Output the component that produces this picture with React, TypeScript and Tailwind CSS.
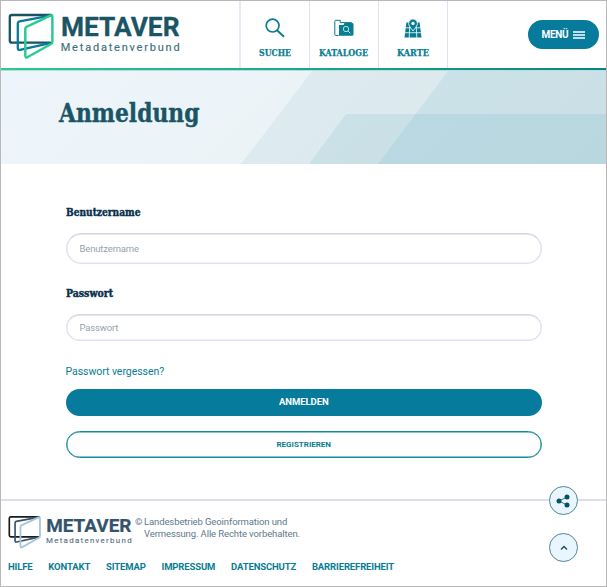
import React from "react";

const SLAB = "font-['DejaVu_Serif_Condensed','DejaVu_Serif',serif] font-bold";

type LogoProps = {
  className: string;
  back: string;
  middle: string;
  front: string;
  title: string;
  subtitle: string;
};

function Logo({ className, back, middle, front, title, subtitle }: LogoProps) {
  return (
    <svg viewBox="0 0 174 50" className={className} fill="none" strokeLinejoin="round" strokeLinecap="round">
      <path d="M43 4H4Q1.8 4 1.8 6V29.5Q1.8 31.7 4 31.7H42" stroke={back} strokeWidth="2.3" />
      <path d="M43.5 4.3 11.6 10.3Q9.8 10.7 9.8 12.6V37Q9.8 39.3 12 38.8L41 32.4" stroke={middle} strokeWidth="2.3" />
      <path d="M42.3 4.7 18.5 15.8Q17.3 16.4 17.3 17.8V44.5Q17.3 47.4 19.8 46L43 33Q44.4 32.2 44.4 30.4V6.2Q44.4 3.8 42.3 4.7Z" stroke={front} strokeWidth="2.5" />
      <text x="53" y="24.6" fontSize="26" fontWeight="700" fontFamily="Roboto, sans-serif" textLength="118.5" lengthAdjust="spacingAndGlyphs" fill={title} stroke={title} strokeWidth=".3">
        METAVER
      </text>
      <text x="52.7" y="40.4" fontSize="11" fontFamily="Roboto, sans-serif" textLength="119" fill={subtitle} stroke={subtitle} strokeWidth=".15">
        Metadatenverbund
      </text>
    </svg>
  );
}

function SearchIcon() {
  return (
    <svg viewBox="0 0 20 20" className="h-5 w-5" fill="none" stroke="#067d91">
      <circle cx="7.6" cy="7.6" r="6.4" strokeWidth="1.7" />
      <path d="m12 12.2 7 6.6" strokeWidth="1.9" />
    </svg>
  );
}

function CatalogIcon() {
  return (
    <svg viewBox="0 0 20 20" className="h-5 w-5" fill="none">
      <path d="M4.5 17.5H1.8Q.8 17.5.8 16.5V3.2Q.8 2.3 1.8 2.3H6.2V4.6H17.5V6" stroke="#067d91" strokeWidth="1" />
      <path d="M5 17.8V7H9.5L10.5 5H18Q19.5 5 19.5 6.3V16.5Q19.5 17.8 18 17.8Z" fill="#067d91" />
      <circle cx="12" cy="11" r="2.7" stroke="#b8dfe5" strokeWidth="1" />
      <path d="m14 13 2.4 2.4" stroke="#b8dfe5" strokeWidth="1" />
    </svg>
  );
}

function MapIcon() {
  return (
    <svg viewBox="0 0 20 20" className="h-5 w-5">
      <path d="M3.4 4.5H16.6L18.5 19.5H1.5Z" fill="#067d91" />
      <path d="M1 9.8H19M1 14.7H19M7 3 6.2 20M13 3l.8 17" stroke="white" strokeWidth=".8" />
      <path d="M10 13C7.8 10 5.6 7.7 5.6 5.4a4.4 4.4 0 0 1 8.8 0C14.4 7.7 12.2 10 10 13Z" fill="#067d91" stroke="white" strokeWidth=".8" />
      <circle cx="10" cy="5.4" r="1.7" fill="white" />
    </svg>
  );
}

const navItems = [
  { label: "SUCHE", icon: <SearchIcon />, size: "w-[32px]", width: 32 },
  { label: "KATALOGE", icon: <CatalogIcon />, size: "w-[49px]", width: 49 },
  { label: "KARTE", icon: <MapIcon />, size: "w-[32px]", width: 32 },
];

type SlabTextProps = {
  children: string;
  width: number;
  size: number;
  weight: number;
  className: string;
  baseline: number;
};

/* Slab-serif text condensed to a fixed measure, thickened by a thin outline. */
function SlabText({ children, width, size, weight, className, baseline }: SlabTextProps) {
  return (
    <svg className={`block overflow-visible ${SLAB} ${className}`}>
      <text
        x="0"
        y={baseline}
        fontSize={size}
        textLength={width}
        lengthAdjust="spacingAndGlyphs"
        fill="currentColor"
        stroke="currentColor"
        strokeWidth={weight}
      >
        {children}
      </text>
    </svg>
  );
}

const links = ["HILFE", "KONTAKT", "SITEMAP", "IMPRESSUM", "DATENSCHUTZ", "BARRIEREFREIHEIT"];

export default function App() {
  return (
    <div className="relative flex h-[587px] w-[607px] flex-col overflow-hidden border border-[#b8b8b8] bg-white font-['Roboto',sans-serif]">
      <header className="flex h-[67px] shrink-0">
        <div className="w-[238px] pt-[10px] pl-[7px]">
          <Logo className="h-[50px] w-[174px]" back="#1b5262" middle="#087b9c" front="#2bcb91" title="#1b5565" subtitle="#3d707d" />
        </div>
        <nav className="flex border-l-2 border-[#e8ebf5]">
          {navItems.map((item) => (
            <a key={item.label} className="flex w-[69px] flex-col items-center border-r border-[#dfe3f0] pt-[17px] text-[#087d94]">
              {item.icon}
              <SlabText width={item.width} size={9.5} weight={0.25} baseline={10} className={`mt-[8px] mr-px h-[12px] ${item.size}`}>
                {item.label}
              </SlabText>
            </a>
          ))}
        </nav>
        <button className="mt-[19px] mr-[7px] ml-auto flex h-[29px] w-[71px] items-center justify-center gap-[5px] rounded-full bg-[#067b9b] text-[10px] font-bold tracking-[-0.3px] text-white">
          MENÜ
          <svg viewBox="0 0 12 8" className="h-[8px] w-[12px]" stroke="white" strokeWidth="1.3">
            <path d="M0 1H12M0 4H12M0 7H12" />
          </svg>
        </button>
      </header>
      <div className="h-[2px] shrink-0 bg-linear-to-r from-[#2bcb91] to-[#088481]" />
      <section className="relative h-[94px] shrink-0 border-t border-[#b9dfda] bg-linear-135 from-[#edf5fc] to-[#e9f1f1]">
        <svg viewBox="0 0 605 93" className="absolute inset-0 h-[93px] w-[605px]" fill="#067b9b">
          <path d="M311 0H605V93H240Z" opacity=".06" />
          <path d="M447 0H605V93H377Z" opacity=".075" />
          <path d="M345 43H605V93H308Z" opacity=".085" />
        </svg>
        <h1 className="relative pt-[25px] pl-[57.5px] text-[#1b5565]">
          <SlabText width={140.5} size={26} weight={0.4} baseline={26} className="h-[34px] w-[141px]">
            Anmeldung
          </SlabText>
        </h1>
      </section>

      <form className="flex h-[335px] shrink-0 flex-col pr-[64px] pl-[64.5px]">
        <label className="mt-[42px] text-[#082f4c]">
          <SlabText width={74.5} size={10.5} weight={0.4} baseline={10} className="h-[14px] w-[75px]">
            Benutzername
          </SlabText>
        </label>
        <input
          placeholder="Benutzername"
          className="mt-[13px] h-[31px] w-full shrink-0 rounded-full border border-[#dde1ee] border-t-[#d3d7e1] px-[13px] text-[9.5px] tracking-[-0.15px] shadow-[inset_0_1px_0_#e3e6ee,inset_0_0_0_0.5px_#e2e5f0] placeholder:text-[#94a3af]"
        />
        <label className="mt-[23px] text-[#082f4c]">
          <SlabText width={47} size={10.5} weight={0.4} baseline={10} className="h-[14px] w-[48px]">
            Passwort
          </SlabText>
        </label>
        <input
          placeholder="Passwort"
          className="mt-[13px] h-[27px] w-full shrink-0 rounded-full border border-[#dde1ee] border-t-[#d3d7e1] px-[13px] text-[9.5px] tracking-[-0.15px] shadow-[inset_0_1px_0_#e3e6ee,inset_0_0_0_0.5px_#e2e5f0] placeholder:text-[#94a3af]"
        />
        <a className="mt-[24px] text-[10.5px] leading-[14px] tracking-[-0.05px] text-[#087d94]">Passwort vergessen?</a>
        <button className="mt-[10px] h-[27px] shrink-0 rounded-full bg-[#067b9b] text-[9.5px] font-bold tracking-[-0.05px] text-white">ANMELDEN</button>
        <button className="mt-[15px] h-[27px] shrink-0 rounded-full border border-[#148b9d] text-[8px] font-bold text-[#087d94] shadow-[inset_0_0_0_0.5px_#148b9d]">
          REGISTRIEREN
        </button>
      </form>

      <footer className="flex-1 border-t-2 border-[#dbdfed] pl-[7px]">
        <div className="flex h-[53px] pt-[13px]">
          <Logo className="-ml-[0.5px] h-[36px] w-[125.3px]" back="#171c20" middle="#35536b" front="#a9c5d9" title="#34536c" subtitle="#557086" />
          <div className="ml-[2.2px] pt-[2px] text-[9.5px] leading-[12px] tracking-[-0.11px] text-[#60798b]">
            <span className="inline-block w-[9px]">©</span>Landesbetrieb Geoinformation und
            <br />
            <span className="pl-[9px]">Vermessung. Alle Rechte vorbehalten.</span>
          </div>
        </div>
        <div className="flex gap-[15.8px] pt-[6px] text-[9.5px] leading-[13px] font-bold tracking-[-0.13px] text-[#087d94]">
          {links.map((label) => (
            <a key={label}>{label}</a>
          ))}
        </div>
      </footer>

      <button className="absolute top-[485px] left-[548px] flex h-[29px] w-[29px] items-center justify-center rounded-full border border-[#4f8796] bg-[#eaf6ff]">
        <svg viewBox="0 0 14 14" className="mr-px h-[14px] w-[14px]" fill="#075269">
          <path d="M11 3 3 7l8 4" fill="none" stroke="#075269" strokeWidth=".8" />
          <circle cx="3" cy="7" r="2.5" />
          <circle cx="11" cy="3" r="2.5" />
          <circle cx="11" cy="11" r="2.5" />
        </svg>
      </button>
      <button className="absolute top-[532px] left-[548px] flex h-[29px] w-[29px] items-center justify-center rounded-full border border-[#4f8796] bg-[#eaf6ff]">
        <svg viewBox="0 0 8 6" className="h-[6px] w-[8px]" fill="none" stroke="#075269" strokeWidth="1.3">
          <path d="M1 4.5 4 1.5l3 3" />
        </svg>
      </button>
    </div>
  );
}
